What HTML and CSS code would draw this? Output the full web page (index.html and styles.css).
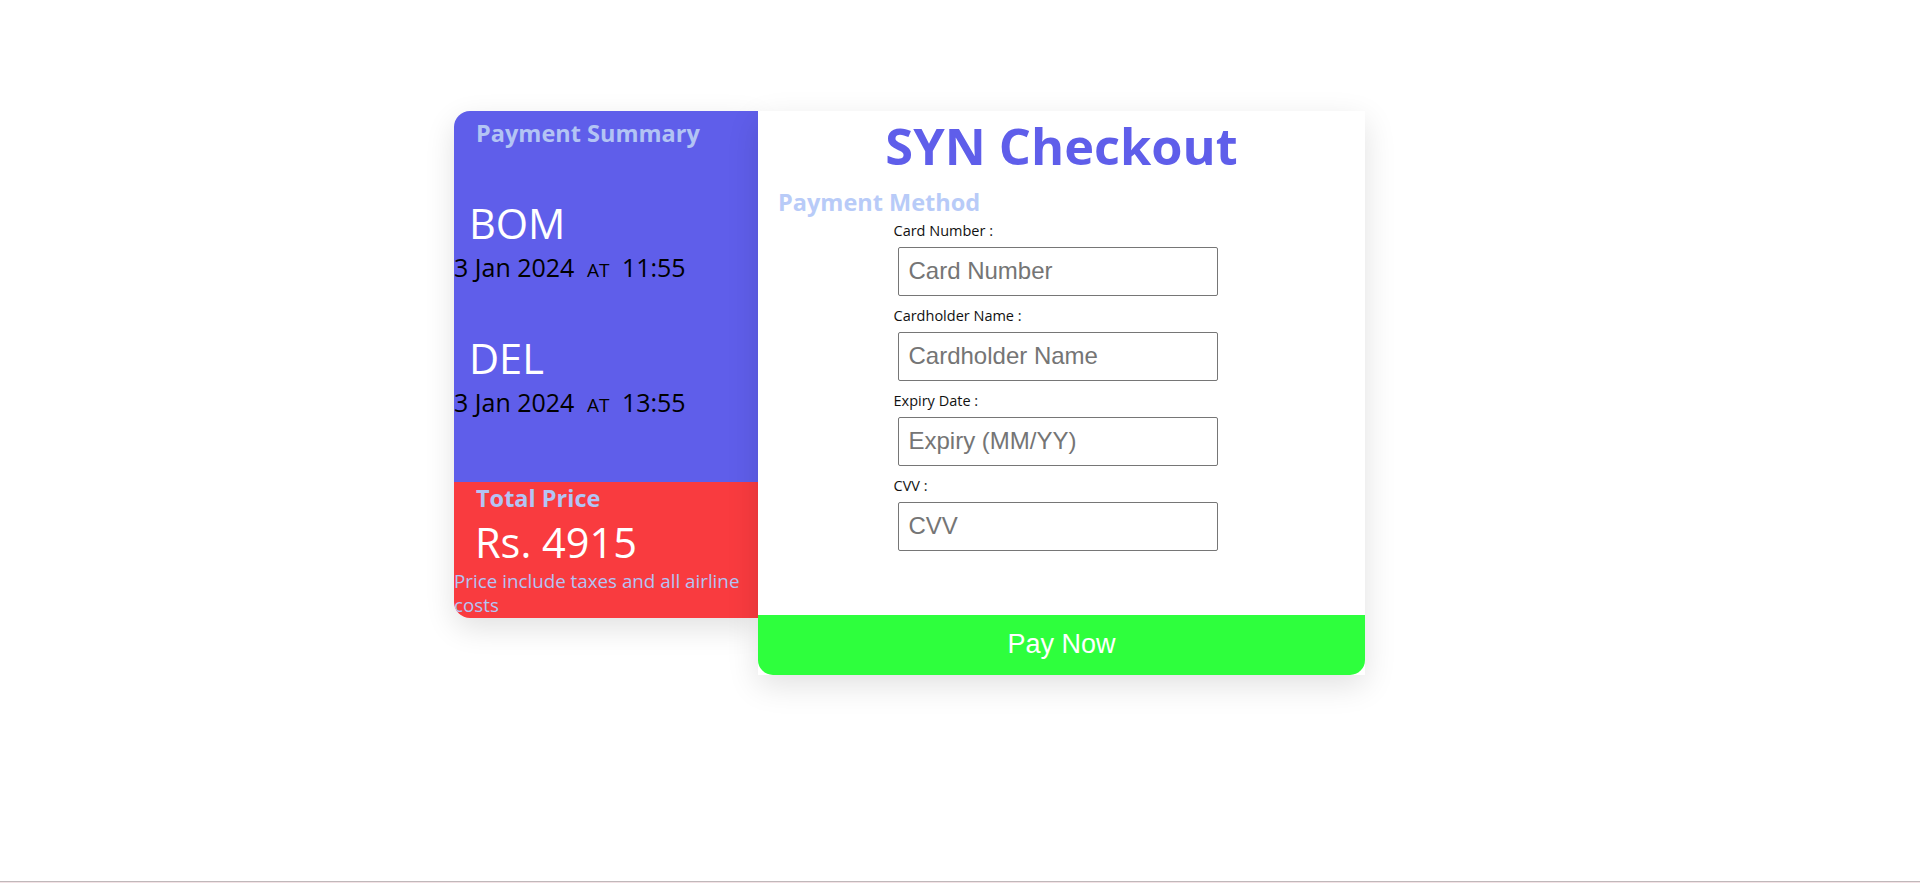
FILE: index.html
```html
<!DOCTYPE html>
<html lang="en">
<head>
<meta charset="utf-8">
<title>SYN Checkout</title>
<link rel="stylesheet" href="styles.css">
</head>
<body>
<main class="page">
  <div class="checkout">
    <aside class="summary">
      <div class="summary-top">
        <h2 class="summary-title">Payment Summary</h2>
        <div class="leg leg-first">
          <div class="city">BOM</div>
          <div class="date">3 Jan 2024 <span class="at">AT</span> 11:55</div>
        </div>
        <div class="leg">
          <div class="city">DEL</div>
          <div class="date">3 Jan 2024 <span class="at">AT</span> 13:55</div>
        </div>
      </div>
      <div class="summary-bottom">
        <h3 class="total-title">Total Price</h3>
        <div class="price">Rs. 4915</div>
        <p class="note">Price include taxes and all airline costs</p>
      </div>
    </aside>
    <section class="card">
      <h1 class="brand">SYN Checkout</h1>
      <h2 class="method-title">Payment Method</h2>
      <form class="form">
        <label class="label first" for="cn">Card Number :</label>
        <input class="field" id="cn" type="text" placeholder="Card Number">
        <label class="label" for="ch">Cardholder Name :</label>
        <input class="field" id="ch" type="text" placeholder="Cardholder Name">
        <label class="label" for="ex">Expiry Date :</label>
        <input class="field" id="ex" type="text" placeholder="Expiry (MM/YY)">
        <label class="label" for="cvv">CVV :</label>
        <input class="field" id="cvv" type="text" placeholder="CVV">
      </form>
      <button class="pay" type="button">Pay Now</button>
    </section>
  </div>
</main>
<div class="bottom-line"></div>
</body>
</html>
```
FILE: styles.css
```css
html, body {
  margin: 0;
  padding: 0;
  background: #ffffff;
}

body {
  font-family: "Open Sans", "Noto Sans", sans-serif;
}

.page {
  height: 881px;
  overflow: hidden;
}

.checkout {
  display: flex;
  align-items: flex-start;
  margin: 111px 0 0 454px;
}

.summary {
  width: 304px;
  height: 507px;
  display: flex;
  flex-direction: column;
  border-radius: 16px 0 0 16px;
  overflow: hidden;
  box-shadow: 0 10px 30px rgba(0, 0, 0, 0.12);
}

.summary-top {
  height: 371px;
  background: #5f5eea;
}

.summary-title {
  margin: 0;
  padding: 6px 0 0 22px;
  font-size: 23.5px;
  line-height: 32px;
  font-weight: 700;
  color: #b3c4f4;
}

.leg {
  margin-top: 43px;
}

.leg-first {
  margin-top: 47px;
}

.city {
  padding-left: 15px;
  font-size: 41.5px;
  line-height: 54px;
  color: #ffffff;
}

.date {
  font-size: 25px;
  line-height: 35px;
  color: #000000;
  white-space: nowrap;
}

.at {
  margin: 0 6px;
  font-size: 19px;
}

.summary-bottom {
  flex: 1;
  background: #f93b3f;
}

.total-title {
  margin: 0;
  padding-left: 22px;
  font-size: 23.5px;
  line-height: 32px;
  font-weight: 700;
  color: #b3c4f4;
}

.price {
  margin-top: 1px;
  padding-left: 21px;
  font-size: 41.5px;
  line-height: 54px;
  color: #ffffff;
}

.note {
  margin: 0;
  font-size: 18.8px;
  line-height: 24px;
  color: #b3c4f4;
}

.card {
  width: 607px;
  height: 564px;
  display: flex;
  flex-direction: column;
  background: #ffffff;
  box-shadow: 0 10px 30px rgba(0, 0, 0, 0.12);
}

.brand {
  margin: 1px 0 0;
  text-align: center;
  font-size: 50.5px;
  line-height: 68px;
  font-weight: 700;
  color: #5f5eea;
}

.method-title {
  margin: 6px 0 0;
  padding-left: 20px;
  font-size: 23.5px;
  line-height: 32px;
  font-weight: 700;
  color: #b8cbf8;
}

.form {
  width: 336px;
  margin: 0 auto;
  display: flex;
  flex-direction: column;
  align-items: flex-start;
}

.label {
  margin-top: 10.5px;
  font-size: 14.5px;
  line-height: 19px;
  color: #111111;
}

.label.first {
  margin-top: 3px;
}

.field {
  box-sizing: border-box;
  width: 320px;
  height: 49px;
  margin: 6.5px 0 0 4px;
  padding: 0 10px;
  border: 1px solid #767676;
  border-radius: 2px;
  font-family: "Liberation Sans", Arial, sans-serif;
  font-size: 24px;
  color: #222222;
  background: #ffffff;
}

.field::placeholder {
  color: #757575;
}

.pay {
  margin-top: auto;
  height: 60px;
  border: none;
  border-radius: 0 0 15px 15px;
  background: #2eff3d;
  color: #ffffff;
  font-family: "Liberation Sans", Arial, sans-serif;
  font-size: 27px;
  padding: 0 0 2px;
  cursor: pointer;
}

.bottom-line {
  height: 1px;
  border-top: 1px solid #c0b8ba;
  background: #f3e3e6;
}
```
